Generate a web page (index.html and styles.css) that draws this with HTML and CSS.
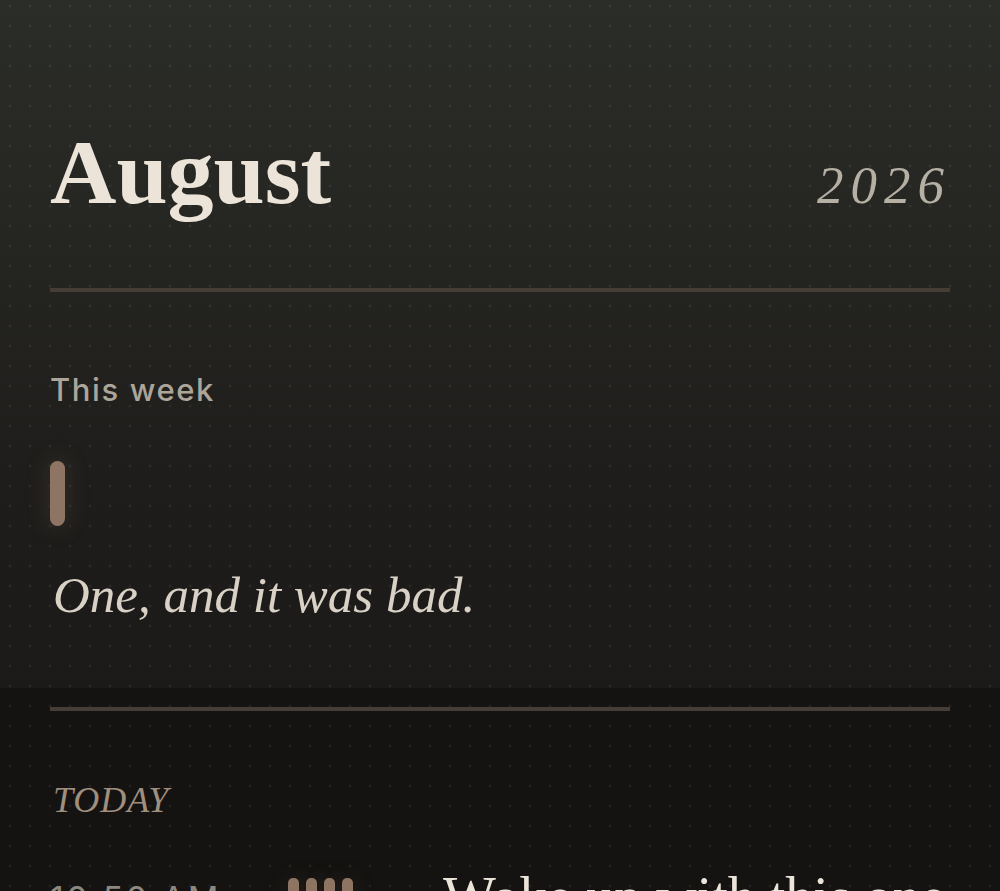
FILE: index.html
```html
<!DOCTYPE html>
<html lang="en">
<head>
<meta charset="utf-8">
<title>August 2026</title>
<link rel="stylesheet" href="styles.css">
</head>
<body>
  <section class="panel">
    <header class="head">
      <h1 class="month">August</h1>
      <span class="year">2026</span>
    </header>
    <div class="rule"></div>
    <h2 class="label">This week</h2>
    <div class="week">
      <span class="pill"></span>
    </div>
    <p class="quote">One, and it was bad.</p>
  </section>
  <main class="main">
    <div class="rule rule-top"></div>
    <h3 class="today">TODAY</h3>
    <div class="entry">
      <span class="time">10:50 AM</span>
      <span class="bars"><i></i><i></i><i></i><i></i></span>
      <p class="entry-text">Woke up with this one</p>
    </div>
  </main>
</body>
</html>
```
FILE: styles.css
```css
html, body {
  margin: 0;
  padding: 0;
}
body {
  width: 1000px;
  height: 891px;
  overflow: hidden;
  background-color: #141311;
  background-image: radial-gradient(circle, rgba(255,255,255,0.055) 1.2px, transparent 1.8px);
  background-size: 20px 20px;
  background-position: 0 -4px;
  font-family: "Liberation Serif", "Times New Roman", serif;
}
.panel {
  padding: 126px 50px 67px;
  background-image:
    radial-gradient(circle, rgba(255,255,255,0.055) 1.2px, transparent 1.8px),
    linear-gradient(180deg, #2b2d29 0%, #252522 35%, #1e1d1b 70%, #1b1a18 100%);
  background-size: 20px 20px, 100% 100%;
  background-position: 0 -4px, 0 0;
}
.head {
  display: flex;
  justify-content: space-between;
  align-items: baseline;
  line-height: 1;
}
.month {
  margin: 0;
  font-size: 92px;
  font-weight: 700;
  line-height: 1;
  color: #ece4d8;
}
.year {
  font-style: italic;
  font-size: 53px;
  letter-spacing: 7px;
  color: #b5afa4;
  margin-right: -1px;
}
.rule {
  margin-top: 70px;
  height: 4px;
  background: #463d36;
}
.label {
  margin: 82px 0 0;
  font-family: Inter, "Noto Sans", sans-serif;
  font-weight: 500;
  font-size: 31px;
  line-height: 1;
  letter-spacing: 1.6px;
  color: #aca59a;
}
.week {
  display: flex;
  margin-top: 56px;
}
.pill {
  display: block;
  width: 15px;
  height: 65px;
  border-radius: 8px;
  background: #8e7563;
  box-shadow: 0 0 22px 4px rgba(142,117,99,0.16);
}
.quote {
  margin: 44px 0 0 3px;
  font-style: italic;
  font-size: 51px;
  line-height: 1;
  color: #d9d1c5;
}
.main {
  padding: 0 50px;
}
.rule-top {
  margin-top: 19px;
}
.today {
  margin: 71px 0 0 3px;
  font-style: italic;
  font-weight: 400;
  font-size: 36px;
  line-height: 1;
  letter-spacing: 1px;
  color: #a08e7e;
}
.entry {
  margin-top: 46px;
  display: grid;
  grid-template-columns: 238px 155px 1fr;
  align-items: start;
}
.time {
  margin-top: 18px;
  font-family: Inter, "Noto Sans", sans-serif;
  font-size: 34px;
  line-height: 1;
  letter-spacing: 2.5px;
  color: #8c877f;
  white-space: nowrap;
}
.bars {
  margin-top: 14px;
  display: flex;
  gap: 7.5px;
}
.bars i {
  display: block;
  width: 10.5px;
  height: 65px;
  border-radius: 5px;
  background: #8e7563;
  box-shadow: 0 0 22px 2px rgba(142,117,99,0.12);
}
.entry-text {
  margin: 0;
  font-size: 56px;
  line-height: 1.2;
  color: #ebe4d9;
  white-space: nowrap;
}
```
